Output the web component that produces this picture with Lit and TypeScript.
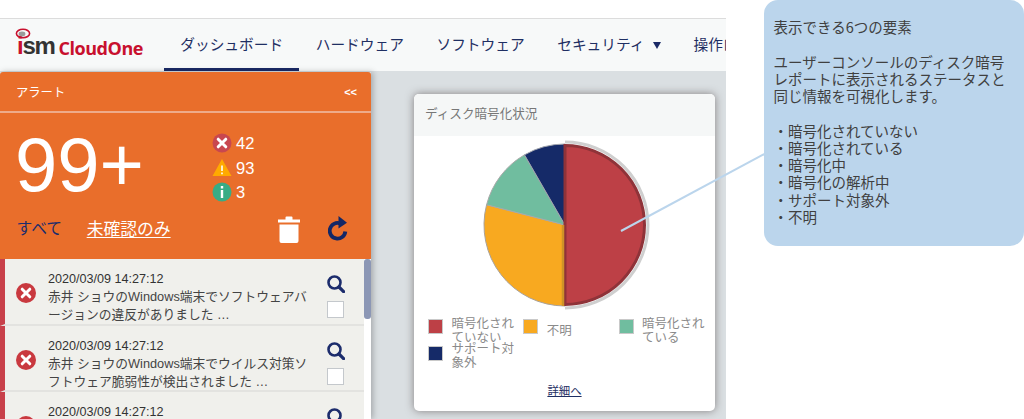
import { LitElement, html, css, svg } from 'lit';
import { customElement } from 'lit/decorators.js';

const tabs = [
  { label: 'ダッシュボード', active: true },
  { label: 'ハードウェア' },
  { label: 'ソフトウェア' },
  { label: 'セキュリティ', caret: true },
  { label: '操作ログ' },
];

const alerts = [
  '赤井 ショウのWindows端末でソフトウェアバージョンの違反がありました …',
  '赤井 ショウのWindows端末でウイルス対策ソフトウェア脆弱性が検出されました …',
  '赤井 ショウのWindows端末でソフトウェアバージョンの違反がありました …',
];

const slices = [
  { from: 180, to: 284.5, fill: '#f8a920', stroke: '#a9a29a', width: 1, r: 81 },
  { from: 284.5, to: 330, fill: '#70bd9f', stroke: '#a9a9a9', width: 1, r: 81 },
  { from: 330, to: 360, fill: '#152a68', stroke: '#a0a4ad', width: 1, r: 81 },
  { from: 0, to: 180, fill: '#bd4046', stroke: '#8f3339', width: 3, r: 79.5 },
];

const legend = [
  { label: '暗号化されていない', color: '#bd4046' },
  { label: '不明', color: '#f8a920' },
  { label: '暗号化されている', color: '#70bd9f' },
  { label: 'サポート対象外', color: '#152a68' },
];

const statusIcon = {
  error: svg`<circle cx="10" cy="10" r="9.5" fill="#c8474f"/><path d="M6.2 6.2l7.6 7.6M13.8 6.2l-7.6 7.6" stroke="#fff" stroke-width="3" stroke-linecap="round"/>`,
  warn: svg`<path d="M10 1L19.5 18H.5z" fill="#ffaa00"/><path d="M10 7.5v5.5M10 14.5v1.8" stroke="#fff" stroke-width="1.6"/>`,
  info: svg`<circle cx="10" cy="10" r="9.5" fill="#38ac85"/><path d="M10 4v2.4M10 8v8" stroke="#fff" stroke-width="2.4"/>`,
};

function point(angle: number, r: number) {
  const a = (angle * Math.PI) / 180;
  return `${(85 + r * Math.sin(a)).toFixed(2)} ${(85 - r * Math.cos(a)).toFixed(2)}`;
}

function slicePath(from: number, to: number, r: number) {
  const large = to - from > 180 ? 1 : 0;
  return `M85 85L${point(from, r)}A${r} ${r} 0 ${large} 1 ${point(to, r)}Z`;
}

@customElement('app-root')
export class AppRoot extends LitElement {
  static styles = css`
    :host {
      display: block;
      position: relative;
      width: 1024px;
      height: 419px;
      overflow: hidden;
      background: #fff;
      font-family: "Liberation Sans", "Noto Sans CJK JP", sans-serif;
    }

    .shot {
      width: 726px;
      height: 419px;
      padding-top: 18px;
      box-sizing: border-box;
      display: flex;
      flex-direction: column;
    }

    .nav {
      flex: none;
      height: 53px;
      box-sizing: border-box;
      display: flex;
      background: #f7f9f9;
      border-top: 1px solid #dcdcdc;
      overflow: hidden;
    }

    .logo {
      flex: none;
      width: 164px;
      box-sizing: border-box;
      padding-left: 17px;
      display: flex;
      align-items: flex-start;
      position: relative;
    }

    .logo .ring {
      position: absolute;
      left: 15px;
      top: 9px;
    }

    .logo .mark {
      margin-top: 15px;
      font: bold 24px/24px "Liberation Sans", sans-serif;
      letter-spacing: -1.3px;
      color: #333;
    }

    .logo .mark b {
      color: #c8102e;
    }

    .logo .name {
      margin: 17px 0 0 4px;
      font: bold 18px/24px "Open Sans", sans-serif;
      letter-spacing: -0.45px;
      color: #c8102e;
    }

    .tab {
      flex: none;
      height: 52px;
      box-sizing: border-box;
      padding: 14px 16.3px 0;
      font: 14.7px/22px "Noto Sans CJK JP", sans-serif;
      color: #1f2f63;
      white-space: nowrap;
    }

    .tab.active {
      border-bottom: 3px solid #1a2a66;
    }

    .caret {
      display: inline-block;
      margin-left: 8.5px;
      vertical-align: 1px;
      width: 0;
      height: 0;
      border-left: 4.5px solid transparent;
      border-right: 4.5px solid transparent;
      border-top: 7px solid #1a2a66;
    }

    .body {
      flex: 1;
      min-height: 0;
      display: flex;
      background: #dadfe2;
    }

    .panel {
      flex: none;
      width: 371px;
      margin-top: 1px;
      display: flex;
      flex-direction: column;
      box-shadow: 2px 0 6px rgba(0, 0, 0, 0.25);
    }

    .orange {
      flex: none;
      height: 187px;
      background: #e96e2b;
      border-radius: 3px 3px 0 0;
      display: flex;
      flex-direction: column;
      color: #fff;
    }

    .orange-head {
      flex: none;
      height: 41px;
      box-sizing: border-box;
      padding: 0 14px 0 16px;
      display: flex;
      justify-content: space-between;
      align-items: center;
      font: 12.3px/16px "Noto Sans CJK JP", sans-serif;
      border-bottom: 2px solid #eeab8a;
    }

    .orange-head .collapse {
      font: bold 11px/16px "Liberation Sans", sans-serif;
    }

    .summary {
      flex: none;
      height: 96px;
      display: flex;
    }

    .big {
      width: 212px;
      padding: 13px 0 0 15px;
      box-sizing: border-box;
      font: 76px/78px "Liberation Sans", sans-serif;
    }

    .counts {
      padding-top: 20px;
      display: flex;
      flex-direction: column;
      gap: 4.5px;
    }

    .count {
      display: flex;
      align-items: center;
      gap: 4px;
      height: 20px;
      font: 16.5px/20px "Liberation Sans", sans-serif;
    }

    .count svg {
      width: 20px;
      height: 20px;
      flex: none;
    }

    .filters {
      flex: 1;
      display: flex;
      align-items: flex-start;
      padding: 7px 22px 0 16.5px;
      font: 15.8px/24px "Noto Sans CJK JP", sans-serif;
    }

    .filters .all {
      color: #1c2c6c;
      margin-right: 24.5px;
    }

    .filters .unread {
      text-decoration: underline;
      text-underline-offset: 2px;
      font-size: 16.8px;
    }

    .filters .trash {
      margin: 0 0 0 auto;
    }

    .filters .reload {
      margin: 0 0 0 28px;
    }

    .list {
      flex: 1;
      min-height: 0;
      display: flex;
      background: #fff;
      overflow: hidden;
    }

    .rows {
      flex: 1;
      min-width: 0;
    }

    .row {
      height: 66.6px;
      box-sizing: border-box;
      display: flex;
      background: #f0f0ec;
      border-left: 5px solid #c8404a;
      border-bottom: 2px solid #e3e3e0;
      color: #333;
    }

    .row .ico {
      flex: none;
      width: 43px;
      display: flex;
      align-items: center;
      padding: 4px 0 0 11px;
      box-sizing: border-box;
    }

    .row .text {
      flex: none;
      width: 262px;
      padding-top: 11px;
      font: 12.6px/18px "Liberation Sans", "Noto Sans CJK JP", sans-serif;
    }

    .row .text .msg {
      color: #444;
      font-size: 12.75px;
    }

    .row .side {
      flex: 1;
      padding: 16px 0 0 17px;
      display: flex;
      flex-direction: column;
      gap: 8px;
    }

    .check {
      width: 17px;
      height: 17px;
      box-sizing: border-box;
      background: #fff;
      border: 1px solid #c4c8cc;
    }

    .scroll {
      flex: none;
      width: 7px;
      height: 60px;
      background: #8c97b5;
      border-radius: 3px;
    }

    .card {
      flex: none;
      align-self: flex-start;
      margin: 23px 0 0 43px;
      width: 301px;
      height: 317px;
      display: flex;
      flex-direction: column;
      background: #fff;
      border-radius: 5px;
      box-shadow: 0 0 8px rgba(60, 50, 50, 0.55);
      overflow: hidden;
    }

    .card-head {
      flex: none;
      height: 42px;
      box-sizing: border-box;
      padding: 0 11px 4px;
      display: flex;
      align-items: center;
      background: #f5f7f7;
      font: 12.6px/18px "Noto Sans CJK JP", sans-serif;
      color: #777;
    }

    .pie {
      flex: none;
      display: block;
      margin: 4px auto 0;
    }

    .legend {
      flex: none;
      margin: 6px 0 0 14px;
      display: grid;
      grid-template-columns: repeat(3, 95.3px);
      grid-auto-rows: 27px;
      font: 12.5px/13.6px "Noto Sans CJK JP", sans-serif;
      color: #8a8a8a;
    }

    .legend-item {
      display: flex;
      gap: 8.5px;
    }

    .legend-item i {
      flex: none;
      width: 15px;
      height: 15px;
      margin-top: 3px;
      box-sizing: border-box;
      border: 1px solid #c9c9c9;
    }

    .legend-item span {
      width: 66px;
      align-self: center;
    }

    .legend-item:nth-child(4) span {
      padding-bottom: 3px;
    }

    .more {
      margin-top: 12px;
      text-align: center;
      font: 11.4px/16px "Noto Sans CJK JP", sans-serif;
      color: #1f2f63;
      text-decoration: underline;
    }

    .connector {
      position: absolute;
      left: 0;
      top: 0;
      pointer-events: none;
    }

    .callout {
      position: absolute;
      left: 764px;
      top: 0;
      width: 260px;
      height: 246px;
      box-sizing: border-box;
      padding: 18px 9.5px 0;
      background: #bbd5ec;
      border-radius: 14px;
      font: 14.5px/17.25px "Noto Sans CJK JP", sans-serif;
      color: #404040;
      white-space: pre-line;
    }
  `;

  render() {
    return html`
      <div class="shot">
        <div class="nav">
          <div class="logo">
            <svg class="ring" width="16" height="11" viewBox="0 0 16 11">
              <ellipse cx="8" cy="5.5" rx="6.6" ry="4.2" fill="none" stroke="#c8102e" stroke-width="1.6" />
              <ellipse cx="7" cy="6" rx="3.4" ry="2.4" fill="#9a9a9a" />
            </svg>
            <span class="mark"><b>i</b>sm</span>
            <span class="name">CloudOne</span>
          </div>
          ${tabs.map(
            (t) => html`<div class="tab ${t.active ? 'active' : ''}">
              ${t.label}${t.caret ? html`<span class="caret"></span>` : ''}
            </div>`
          )}
        </div>
        <div class="body">
          <div class="panel">
            <div class="orange">
              <div class="orange-head"><span>アラート</span><span class="collapse">&lt;&lt;</span></div>
              <div class="summary">
                <div class="big">99+</div>
                <div class="counts">
                  <div class="count"><svg viewBox="0 0 20 20">${statusIcon.error}</svg>42</div>
                  <div class="count"><svg viewBox="0 0 20 20">${statusIcon.warn}</svg>93</div>
                  <div class="count"><svg viewBox="0 0 20 20">${statusIcon.info}</svg>3</div>
                </div>
              </div>
              <div class="filters">
                <span class="all">すべて</span>
                <span class="unread">未確認のみ</span>
                <svg class="trash" width="22" height="27" viewBox="0 0 22 27">
                  <path d="M0 3.5h7.5V1.5Q7.5.5 8.5.5h5q1 0 1 1v2H22V6.5H0zM1.5 8.5h19V25q0 2-2 2h-15q-2 0-2-2z" fill="#fff" />
                </svg>
                <svg class="reload" width="21" height="25" viewBox="0 0 21 25">
                  <path d="M17.3 12a7.8 7.8 0 1 1-5-8" fill="none" stroke="#132766" stroke-width="3.8" transform="translate(0 3.5)" />
                  <path d="M10.5 0L19 6.8 10.5 12.5z" fill="#132766" />
                </svg>
              </div>
            </div>
            <div class="list">
              <div class="rows">
                ${alerts.map(
                  (a) => html`<div class="row">
                    <div class="ico">
                      <svg width="20" height="20" viewBox="0 0 20 20">
                        <circle cx="10" cy="10" r="10" fill="#c9393f" />
                        <path d="M6.2 6.2l7.6 7.6M13.8 6.2l-7.6 7.6" stroke="#fff" stroke-width="3" stroke-linecap="round" />
                      </svg>
                    </div>
                    <div class="text">
                      <div>2020/03/09 14:27:12</div>
                      <div class="msg">${a}</div>
                    </div>
                    <div class="side">
                      <svg width="18" height="18" viewBox="0 0 18 18">
                        <circle cx="7.5" cy="7.5" r="6" fill="none" stroke="#1c2c6c" stroke-width="2.6" />
                        <path d="M12 12l4.6 4.6" stroke="#1c2c6c" stroke-width="3.2" stroke-linecap="round" />
                      </svg>
                      <div class="check"></div>
                    </div>
                  </div>`
                )}
              </div>
              <div class="scroll"></div>
            </div>
          </div>
          <div class="card">
            <div class="card-head">ディスク暗号化状況</div>
            <svg class="pie" width="170" height="170" viewBox="0 0 170 170">
              <path d="M85 2A83 83 0 0 1 85 168" fill="none" stroke="#cfcfcf" stroke-width="3" />
              ${slices.map(
                (s) =>
                  svg`<path d=${slicePath(s.from, s.to, s.r)} fill=${s.fill} stroke=${s.stroke} stroke-width=${s.width} />`
              )}
              <path d="M83 85V166" stroke="#cf9327" stroke-width="2.5" />
            </svg>
            <div class="legend">
              ${legend.map(
                (l) => html`<div class="legend-item">
                  <i style="background:${l.color}"></i><span>${l.label}</span>
                </div>`
              )}
            </div>
            <div class="more">詳細へ</div>
          </div>
        </div>
      </div>
      <svg class="connector" width="1024" height="419">
        <path d="M621 231L770 151" stroke="#bbd5ec" stroke-width="2" fill="none" />
      </svg>
      <div class="callout">表示できる6つの要素

ユーザーコンソールのディスク暗号
レポートに表示されるステータスと
同じ情報を可視化します。

・暗号化されていない
・暗号化されている
・暗号化中
・暗号化の解析中
・サポート対象外
・不明</div>
    `;
  }
}
